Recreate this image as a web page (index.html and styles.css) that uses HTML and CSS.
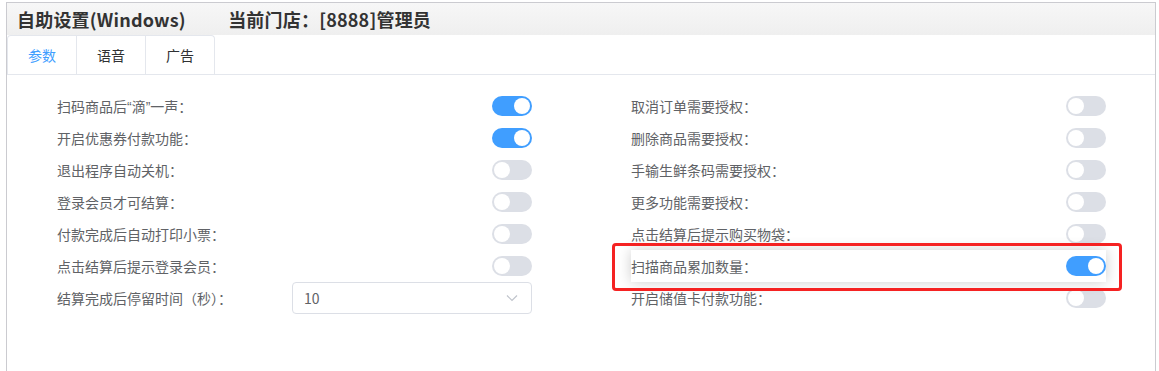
FILE: index.html
```html
<!DOCTYPE html>
<html lang="zh-CN">
<head>
    <meta charset="UTF-8">
    <meta name="viewport" content="width=device-width, initial-scale=1.0">
    <title>自助设置(Windows)</title>
    <link rel="stylesheet" href="styles.css">
</head>
<body>
<div class="panel">
    <div class="panel-head">
        <span>自助设置(Windows)</span>
        <span class="store">当前门店：[8888]管理员</span>
    </div>

    <div class="tabs">
        <div class="tab-nav">
            <div class="tab active">参数</div>
            <div class="tab">语音</div>
            <div class="tab">广告</div>
        </div>
    </div>

    <div class="form">
        <div class="col">
            <div class="row"><span class="label">扫码商品后<span class="q">“</span>滴<span class="q">”</span>一声：</span><span class="switch on"></span></div>
            <div class="row"><span class="label">开启优惠券付款功能：</span><span class="switch on"></span></div>
            <div class="row"><span class="label">退出程序自动关机：</span><span class="switch"></span></div>
            <div class="row"><span class="label">登录会员才可结算：</span><span class="switch"></span></div>
            <div class="row"><span class="label">付款完成后自动打印小票：</span><span class="switch"></span></div>
            <div class="row"><span class="label">点击结算后提示登录会员：</span><span class="switch"></span></div>
            <div class="row">
                <span class="label">结算完成后停留时间（秒）：</span>
                <div class="select">
                    <span>10</span>
                    <svg width="12" height="8" viewBox="0 0 12 8"><path d="M1 1.5 L6 6.5 L11 1.5" fill="none" stroke="#c0c4cc" stroke-width="1.2"/></svg>
                </div>
            </div>
        </div>
        <div class="col">
            <div class="row"><span class="label">取消订单需要授权：</span><span class="switch"></span></div>
            <div class="row"><span class="label">删除商品需要授权：</span><span class="switch"></span></div>
            <div class="row"><span class="label">手输生鲜条码需要授权：</span><span class="switch"></span></div>
            <div class="row"><span class="label">更多功能需要授权：</span><span class="switch"></span></div>
            <div class="row"><span class="label">点击结算后提示购买物袋：</span><span class="switch"></span></div>
            <div class="row marked"><span class="label">扫描商品累加数量：</span><span class="switch on"></span></div>
            <div class="row"><span class="label">开启储值卡付款功能：</span><span class="switch"></span></div>
        </div>
    </div>
</div>
</body>
</html>
```

FILE: styles.css
```css
body { margin: 0; background: #fff; font-family: "Noto Sans CJK SC", "Noto Sans", sans-serif; color: #606266; overflow: hidden; }
.panel { margin: 2px 3px 0 6px; border: 1px solid #cbcbd0; height: 420px; box-sizing: border-box; }
.panel-head { height: 32px; line-height: 32px; padding-left: 10px; background: linear-gradient(#f7f7f7, #efefef); font-size: 18px; font-weight: bold; color: #333; letter-spacing: 0.2px; }
.panel-head .store { margin-left: 38px; }
.tabs { border-bottom: 1px solid #e4e7ed; height: 40px; box-sizing: border-box; }
.tab-nav { display: inline-flex; border: 1px solid #e4e7ed; border-bottom: none; border-radius: 4px 4px 0 0; }
.tab { height: 38px; line-height: 38px; padding: 0 20px; font-size: 14px; color: #303133; border-left: 1px solid #e4e7ed; }
.tab:first-child { border-left: none; }
.tab.active { color: #409eff; }
.form { display: grid; grid-template-columns: 1fr 1fr; column-gap: 99px; padding: 15px 49px 0 50px; }
.row { height: 32px; display: flex; align-items: center; justify-content: space-between; }
.label { font-size: 14px; color: #606266; }
.label .q { font-family: "Liberation Sans", sans-serif; }
.switch { position: relative; width: 40px; height: 20px; border-radius: 10px; background: #dcdfe6; }
.switch::after { content: ""; position: absolute; top: 2px; left: 2px; width: 16px; height: 16px; border-radius: 50%; background: #fff; }
.switch.on { background: #409eff; }
.switch.on::after { left: 22px; }
.select { width: 240px; height: 32px; box-sizing: border-box; border: 1px solid #dcdfe6; border-radius: 4px; padding: 0 13px 0 11px; display: flex; align-items: center; justify-content: space-between; font-size: 14px; color: #606266; }
.marked { position: relative; z-index: 1; background: #fff; box-shadow: 0 0 14px rgba(0, 0, 0, 0.2); }
.marked::after { content: ""; position: absolute; top: -7px; bottom: -9px; left: -19px; right: -16px; border: 3px solid #f52222; border-radius: 4px; }
```
